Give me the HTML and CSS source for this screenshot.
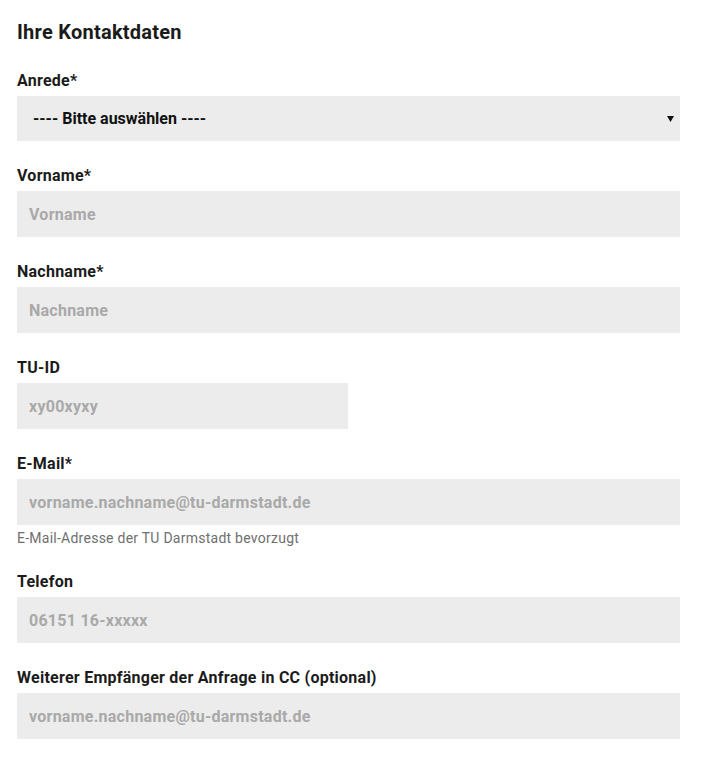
FILE: index.html
```html
<!DOCTYPE html>
<html lang="de">
<head>
<meta charset="utf-8">
<title>Ihre Kontaktdaten</title>
<link rel="stylesheet" href="styles.css">
</head>
<body>
<form class="form">
  <h2 class="title">Ihre Kontaktdaten</h2>

  <div class="group">
    <label class="label" for="anrede">Anrede*</label>
    <div class="select">
      <span class="select-text">---- Bitte auswählen ----</span>
      <svg class="arrow" width="7" height="6" viewBox="0 0 7 6"><path d="M0 0H7L3.5 6Z" fill="#111"/></svg>
    </div>
  </div>

  <div class="group">
    <label class="label">Vorname*</label>
    <input class="input" type="text" placeholder="Vorname">
  </div>

  <div class="group">
    <label class="label">Nachname*</label>
    <input class="input" type="text" placeholder="Nachname">
  </div>

  <div class="group">
    <label class="label">TU-ID</label>
    <input class="input input-short" type="text" placeholder="xy00xyxy">
  </div>

  <div class="group">
    <label class="label">E-Mail*</label>
    <input class="input" type="text" placeholder="vorname.nachname@tu-darmstadt.de">
    <div class="help">E-Mail-Adresse der TU Darmstadt bevorzugt</div>
  </div>

  <div class="group">
    <label class="label">Telefon</label>
    <input class="input" type="text" placeholder="06151 16-xxxxx">
  </div>

  <div class="group">
    <label class="label">Weiterer Empfänger der Anfrage in CC (optional)</label>
    <input class="input" type="text" placeholder="vorname.nachname@tu-darmstadt.de">
  </div>
</form>
</body>
</html>
```

FILE: styles.css
```css
* { box-sizing: border-box; }
html, body { margin: 0; padding: 0; background: #fff; }
body {
  font-family: Roboto, "Liberation Sans", Arial, sans-serif;
  color: #1b1b1b;
}
.form {
  width: 663px;
  margin-left: 17px;
  padding-top: 20px;
}
.title {
  margin: 0 0 26px 0;
  font-size: 20px;
  line-height: 24px;
  font-weight: 700;
  letter-spacing: 0.25px;
  color: #1b1b1b;
}
.group {
  display: flex;
  flex-direction: column;
  margin-bottom: 24px;
}
.label {
  display: block;
  font-size: 16px;
  line-height: 22px;
  font-weight: 700;
  letter-spacing: 0.25px;
  margin-bottom: 4px;
  color: #1b1b1b;
}
.select {
  height: 45px;
  background: #ececec;
  display: flex;
  align-items: center;
  justify-content: space-between;
  padding: 0 6px 0 16px;
}
.select-text {
  font-size: 16px;
  font-weight: 700;
  color: #111;
}
.arrow { display: block; }
.input {
  display: block;
  width: 100%;
  height: 46px;
  border: 0;
  outline: none;
  background: #ececec;
  padding: 0 12px;
  font-family: inherit;
  font-size: 16px;
  font-weight: 700;
  letter-spacing: 0.25px;
  color: #111;
  border-radius: 0;
}
.input::placeholder { color: #a9a9a9; opacity: 1; }
.input-short { width: 331px; }
.help {
  margin-top: 4px;
  font-size: 14px;
  line-height: 18px;
  letter-spacing: 0.25px;
  color: #6f6f6f;
}
```
